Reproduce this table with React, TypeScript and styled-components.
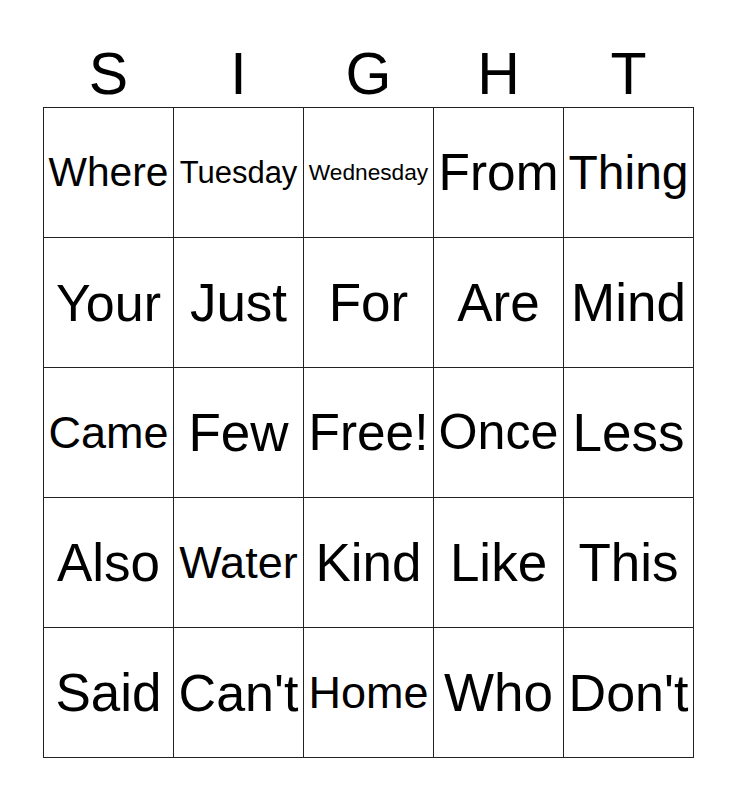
import React from "react";
import styled, { createGlobalStyle } from "styled-components";

const Global = createGlobalStyle`
  html, body { margin: 0; padding: 0; background: #fff; }
  body { font-family: "Liberation Sans", Arial, sans-serif; color: #000; }
`;

const Page = styled.div`
  width: 736px;
  height: 800px;
  padding: 45px 0 0 43px;
  box-sizing: border-box;
`;

const Header = styled.div`
  display: grid;
  grid-template-columns: repeat(5, 130px);
  width: 651px;
  height: 59px;
  margin-bottom: 3px;
`;

const Letter = styled.div`
  font-size: 59px;
  line-height: 59px;
  text-align: center;
  padding-left: 1px;
`;

const Board = styled.div`
  display: grid;
  grid-template-columns: repeat(5, 130px);
  grid-auto-rows: 130px;
  width: 651px;
  border-left: 1px solid #222;
  border-top: 1px solid #222;
  box-sizing: border-box;
`;

const Cell = styled.div<{ $size: number }>`
  border-right: 1px solid #222;
  border-bottom: 1px solid #222;
  display: flex;
  align-items: center;
  justify-content: center;
  font-size: ${(p) => p.$size}px;
  line-height: 1;
  white-space: nowrap;
  overflow: hidden;
`;

const words: [string, number][] = [
  ["Where", 40.7], ["Tuesday", 31], ["Wednesday", 22.7], ["From", 51.4], ["Thing", 48],
  ["Your", 52], ["Just", 53], ["For", 53], ["Are", 53], ["Mind", 53],
  ["Came", 45], ["Few", 53], ["Free!", 51.4], ["Once", 50.2], ["Less", 53],
  ["Also", 53], ["Water", 45], ["Kind", 53], ["Like", 53], ["This", 53],
  ["Said", 53], ["Can't", 52], ["Home", 45], ["Who", 53], ["Don't", 52],
];

export default function App() {
  return (
    <>
      <Global />
      <Page>
        <Header>
          {"SIGHT".split("").map((l, i) => (
            <Letter key={i}>{l}</Letter>
          ))}
        </Header>
        <Board>
          {words.map(([w, s], i) => (
            <Cell key={i} $size={s}>{w}</Cell>
          ))}
        </Board>
      </Page>
    </>
  );
}
